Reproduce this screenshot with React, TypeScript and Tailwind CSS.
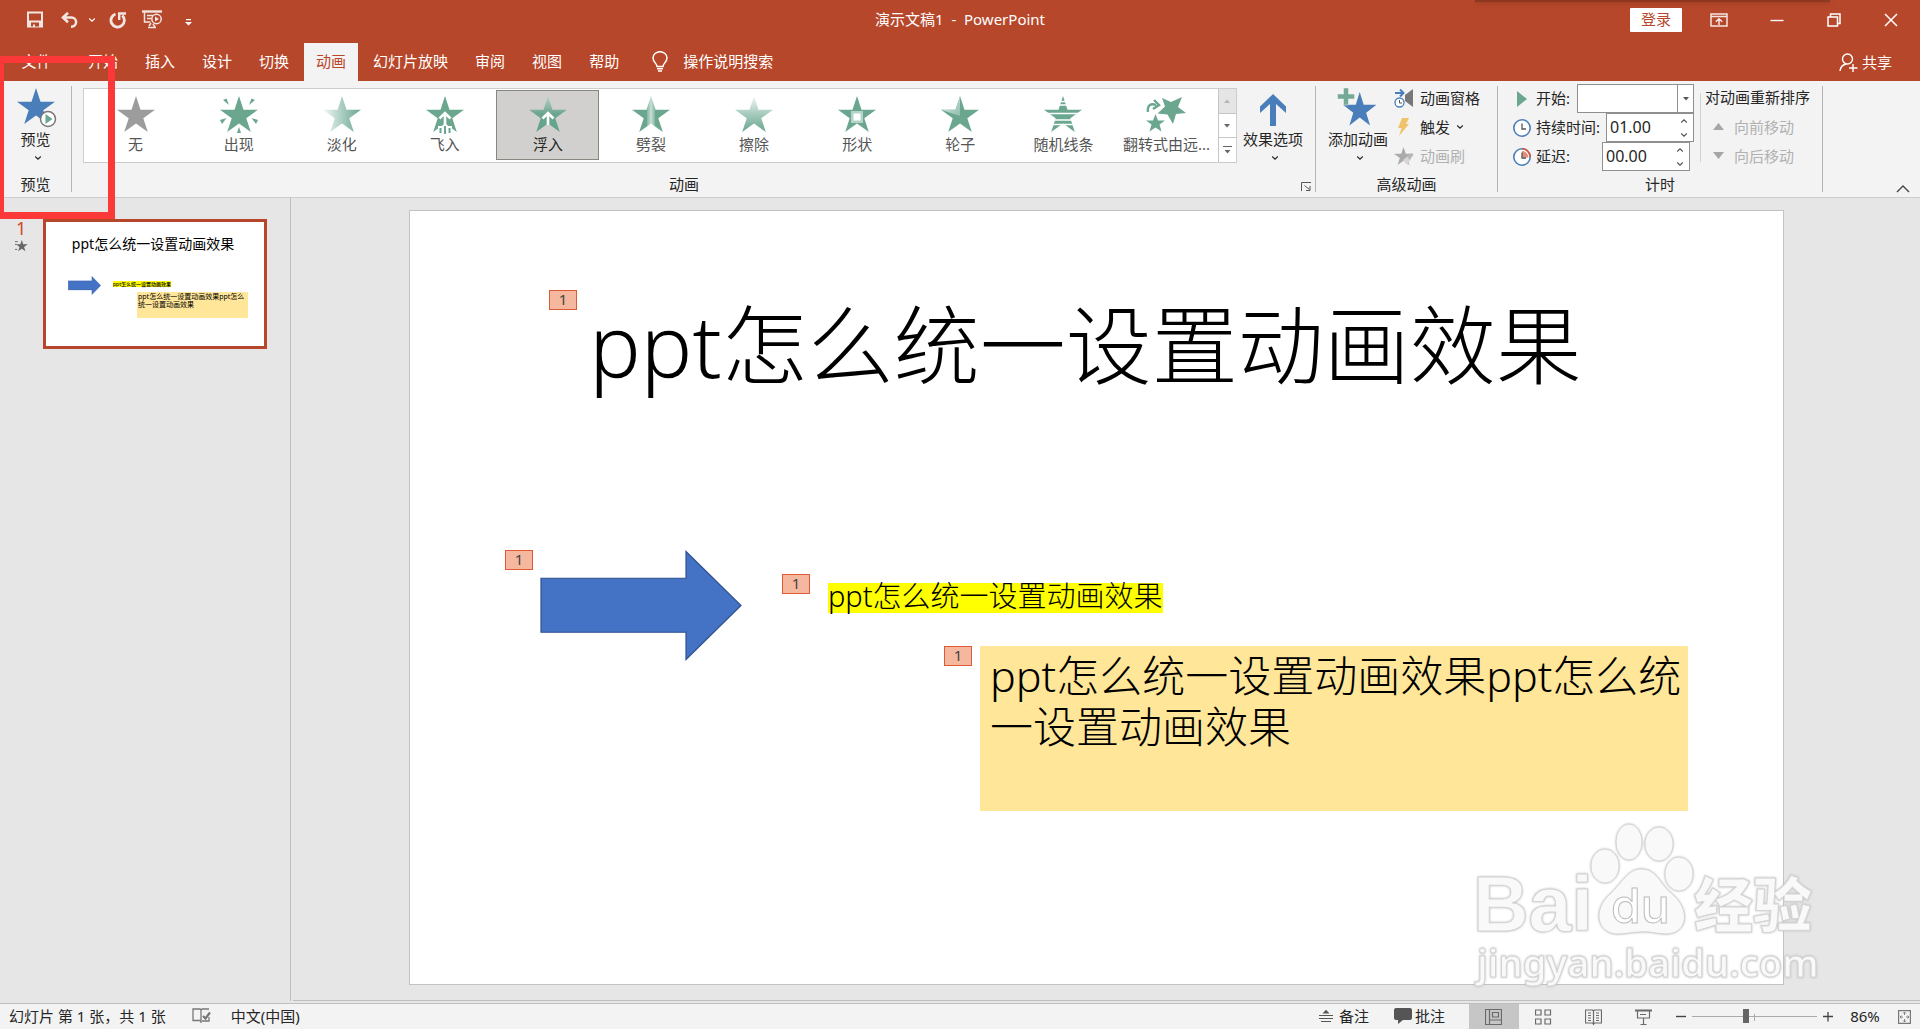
import React, { useState } from "react";

const TITLE = "ppt怎么统一设置动画效果";
const STAR = "19,0 23.5,13.7 38,13.7 26.3,22.2 30.8,36 19,27.5 7.2,36 11.7,22.2 0,13.7 14.5,13.7";
const GREEN = "#6ba68f";

function Chevron({ className = "" }: { className?: string }) {
  return (
    <svg className={className} width="8" height="6" viewBox="0 0 8 6" fill="none" stroke="currentColor" strokeWidth="1.1">
      <path d="M1.2 1.5 4 4.2 6.8 1.5" />
    </svg>
  );
}

/* ---------- title bar ---------- */

function TitleBar() {
  return (
    <div className="relative flex h-[43px] items-center px-[26px] pb-1 text-white">
      <div className="absolute top-0 right-[90px] h-[2px] w-[355px] bg-[#8f3820] shadow-[0_1px_4px_#8f3820]" />
      <div className="flex flex-1 items-center">
        <button aria-label="保存">
          <svg width="18" height="17" viewBox="0 0 18 17" fill="#f3e6e2">
            <path fillRule="evenodd" d="M1 .5h16v16H1zM3 2.500v7h12v-7zM5 11.500v4h2v-2h2v2h4v-4z" />
          </svg>
        </button>
        <button aria-label="撤消" className="ml-[17px]">
          <svg width="18" height="16" viewBox="0 0 18 16" fill="none" stroke="#f3e6e2" strokeWidth="2.600">
            <path d="M2 5.500h8.500a4.600 4.600 0 0 1 0 9.200H10M7 .8 2 5.500l5 4.700" />
          </svg>
        </button>
        <button aria-label="撤消选项" className="ml-[9px]">
          <Chevron />
        </button>
        <button aria-label="重复" className="ml-[13px]">
          <svg width="18" height="18" viewBox="0 0 18 18" fill="none" stroke="#f3e6e2" strokeWidth="2.800">
            <path d="M6.500 3A6.700 6.700 0 1 0 13.300 4.500" />
            <path d="M10.200 9V2.500H17" strokeWidth="2.400" />
          </svg>
        </button>
        <button aria-label="从头开始" className="ml-[15px]">
          <svg width="21" height="19" viewBox="0 0 21 19" fill="none" stroke="#f3e6e2" strokeWidth="1.500">
            <path d="M0 1.500h20" strokeWidth="2.400" />
            <path d="M2.500 2v10h6M5 5.500h6M5 8.500h4M9 13l-2 3M6 17.500h8M11 14l2 3" />
            <circle cx="14.500" cy="9" r="4.700" />
            <path d="M13 6.500v5l4-2.500z" fill="#f3e6e2" stroke="none" />
          </svg>
        </button>
        <button aria-label="自定义快速访问工具栏" className="ml-[22px] mt-1">
          <svg width="7" height="8" viewBox="0 0 7 8" fill="#fff">
            <path d="M1 1h5v1.200H1zM0 4h7L3.500 7.500z" />
          </svg>
        </button>
      </div>
      <div className="pb-0.5 whitespace-pre">{"演示文稿1  -  PowerPoint"}</div>
      <div className="flex flex-1 items-center justify-end">
        <button className="mr-[28px] h-6 w-[52px] rounded-[1px] bg-white pb-px text-[#b7472a]">登录</button>
        <button aria-label="功能区显示选项" className="mr-[42px]">
          <svg width="18" height="14" viewBox="0 0 18 14" fill="none" stroke="#f3e6e2" strokeWidth="1.500">
            <path d="M1 1h16v12H1zM1 3.500h16M9 12V6M5.800 8.800 9 5.800l3.200 3" />
          </svg>
        </button>
        <button aria-label="最小化" className="mr-[43px]">
          <svg width="14" height="14" viewBox="0 0 14 14" stroke="#fff" strokeWidth="1.400">
            <path d="M.5 7.500h13" />
          </svg>
        </button>
        <button aria-label="还原" className="mr-[43px]">
          <svg width="14" height="14" viewBox="0 0 14 14" fill="none" stroke="#fff" strokeWidth="1.500">
            <path d="M1 4h9.500v9H1zM3.500 4V1H13v9.500h-2.500" />
          </svg>
        </button>
        <button aria-label="关闭" className="-mr-1">
          <svg width="14" height="14" viewBox="0 0 14 14" stroke="#fff" strokeWidth="1.500">
            <path d="m1 1 12 12M13 1 1 13" />
          </svg>
        </button>
      </div>
    </div>
  );
}

/* ---------- tabs ---------- */

const TABS = ["开始", "插入", "设计", "切换", "动画", "幻灯片放映", "审阅", "视图", "帮助"];

function TabBar() {
  return (
    <div className="flex h-[38px] items-stretch gap-[3px] text-white">
      <button className="w-[73px] pb-0.5">文件</button>
      {TABS.map((t) => (
        <button key={t} className={t === "动画" ? "bg-[#f3f3f3] px-3 pb-0.5 text-[#b7472a]" : "px-3 pb-0.5"}>
          {t}
        </button>
      ))}
      <button className="ml-[18px] flex items-center gap-[15px] pb-0.5">
        <svg width="16" height="21" viewBox="0 0 16 21" fill="none" stroke="#fff" strokeWidth="1.500">
          <path d="M5 15.500c0-3-4-4.500-4-8.500a7 6.300 0 0 1 14 0c0 4-4 5.500-4 8.500zM5 17.800h6M6 20h4" />
        </svg>
        操作说明搜索
      </button>
      <button className="mr-7 ml-auto flex items-center gap-1">
        <svg width="19" height="19" viewBox="0 0 19 19" fill="none" stroke="#fff" strokeWidth="1.400">
          <circle cx="8.500" cy="6" r="5" />
          <path d="M1 18c.5-4 3-6.500 6.500-7M14 11v8M10 15h8.500" />
        </svg>
        共享
      </button>
    </div>
  );
}

/* ---------- ribbon ---------- */

function Stops({ id, x2, y2, stops }: { id: string; x2: string; y2: string; stops: [string, string][] }) {
  return (
    <linearGradient id={id} x1="0" y1="0" x2={x2} y2={y2}>
      {stops.map(([o, c]) => (
        <stop key={o} offset={o} stopColor={c} />
      ))}
    </linearGradient>
  );
}

const EFFECTS: { name: string; art: React.ReactNode }[] = [
  { name: "无", art: <polygon points={STAR} fill="#9c9c9c" /> },
  {
    name: "出现",
    art: (
      <g fill={GREEN}>
        <polygon points={STAR} />
        <path d="M3 4l3.500-1.500L9 9zM35 4l-3.500-1.500L29 9zM0 24l6.500-2L2 28zM38 24l-6.500-2 4.500 6zM17 37l2-6 2 6z" />
      </g>
    ),
  },
  {
    name: "淡化",
    art: (
      <>
        <Stops id="fade" x2="1" y2="0" stops={[["0", "#f2f8f6"], ["0.6", "#9cc5b6"], ["1", GREEN]]} />
        <polygon points={STAR} fill="url(#fade)" />
      </>
    ),
  },
  {
    name: "飞入",
    art: (
      <>
        <polygon points={STAR} fill={GREEN} />
        <path d="M12 38V30h14v8z" fill="#fff" />
        <path d="M19 29V18M13.500 22.500 19 17l5.500 5.500" fill="none" stroke="#fff" strokeWidth="2.600" />
        <path d="M14.500 32v5M19 30v8M23.500 32v5" stroke={GREEN} strokeWidth="2" />
      </>
    ),
  },
  {
    name: "浮入",
    art: (
      <>
        <Stops id="float" x2="0" y2="1" stops={[["0", "#b9d3c9"], ["0.5", GREEN], ["1", "#62a38a"]]} />
        <polygon points={STAR} fill="url(#float)" />
        <path d="M19 29V18M13.500 22.500 19 17l5.500 5.500" fill="none" stroke="#fff" strokeWidth="2.600" />
      </>
    ),
  },
  {
    name: "劈裂",
    art: (
      <>
        <Stops id="split" x2="1" y2="0" stops={[["0.38", GREEN], ["0.4", "#86b7a4"], ["0.5", "#c9e0d8"], ["0.6", "#86b7a4"], ["0.62", GREEN]]} />
        <polygon points={STAR} fill="url(#split)" />
      </>
    ),
  },
  {
    name: "擦除",
    art: (
      <>
        <Stops id="wipe" x2="0" y2="1" stops={[["0", "#f2f8f6"], ["0.5", "#a5cbbd"], ["1", GREEN]]} />
        <polygon points={STAR} fill="url(#wipe)" />
      </>
    ),
  },
  {
    name: "形状",
    art: (
      <>
        <polygon points={STAR} fill={GREEN} />
        <rect x="13" y="15" width="12" height="12" fill="#b5d3c8" />
        <rect x="15.500" y="17.500" width="7" height="7" fill="#fff" />
      </>
    ),
  },
  {
    name: "轮子",
    art: (
      <>
        <polygon points={STAR} fill={GREEN} />
        <Stops id="wheel" x2="1" y2="1" stops={[["0", "#e5f1ed"], ["1", "#8fbdac"]]} />
        <polygon points="19,0 19,20 0,13.7 14.5,13.7" fill="url(#wheel)" />
      </>
    ),
  },
  {
    name: "随机线条",
    art: (
      <>
        <polygon points={STAR} fill={GREEN} />
        <path d="M0 5.500h38M0 9h38M0 17.500h38M0 24h38M0 28.500h38" stroke="#fff" strokeWidth="1.300" />
      </>
    ),
  },
  {
    name: "翻转式由远...",
    art: (
      <g fill={GREEN}>
        <polygon points="35,1 31,11 39,17 29,18 26,28 20.5,18.5 10.5,17.5 18,10.5 15,2 24,6" />
        <polygon points="8.5,18 11,24.5 18,24.5 12.5,28.5 14.5,35.5 8.5,31.5 2.5,35.5 4.5,28.5 -1,24.5 6,24.5" />
        <path d="M1 16C0 9 4 7 9 9M7 4l5 5-6 4" fill="none" stroke={GREEN} strokeWidth="2.400" />
      </g>
    ),
  },
];

function Group({
  label,
  className = "",
  labelClass = "",
  children,
}: {
  label: string;
  className?: string;
  labelClass?: string;
  children: React.ReactNode;
}) {
  return (
    <section aria-label={label} className={"relative flex flex-col " + className}>
      <div className="flex flex-1">{children}</div>
      <div className={"h-[22px] text-center leading-[18px] " + labelClass}>{label}</div>
    </section>
  );
}

function Rule() {
  return <div className="mt-[5px] mb-[5px] w-px shrink-0 bg-[#b5b5b5]" />;
}

function BigButton({ label, icon, className = "" }: { label: string; icon: React.ReactNode; className?: string }) {
  return (
    <button className={"flex flex-col items-center " + className}>
      <span className="flex h-[48px] items-end">{icon}</span>
      <span className="leading-5">{label}</span>
      <Chevron className="mt-1.5 ml-1" />
    </button>
  );
}

function Gallery() {
  const [sel, setSel] = useState("浮入");
  return (
    <div className="mt-[7px] flex h-[75px] flex-1 border border-[#cdcdcd] bg-white">
      <div className="flex flex-1 items-start pt-px">
        {EFFECTS.map((e) => (
          <button
            key={e.name}
            onClick={() => setSel(e.name)}
            className={
              "flex h-[70px] min-w-0 flex-1 flex-col items-center border pt-[5px] " +
              (sel === e.name ? "border-[#85887f] bg-[#d2d0ce] text-[#262626]" : "border-transparent text-[#555]")
            }
          >
            <svg width="38" height="38" viewBox="0 0 38 38" className="shrink-0 overflow-visible">
              {e.art}
            </svg>
            <span className="leading-5 whitespace-nowrap">{e.name}</span>
          </button>
        ))}
      </div>
      <div className="flex w-[18px] flex-col divide-y divide-[#c6c6c6] border-l border-[#c6c6c6] text-[#666]">
        <button aria-label="上一行" className="flex flex-1 items-center justify-center bg-[#e5e5e5] text-[#b5b5b5]">
          <svg width="6" height="4" viewBox="0 0 6 4" fill="currentColor"><path d="M0 4 3 .5 6 4z" /></svg>
        </button>
        <button aria-label="下一行" className="flex flex-1 items-center justify-center">
          <svg width="6" height="4" viewBox="0 0 6 4" fill="currentColor"><path d="M0 0h6L3 3.500z" /></svg>
        </button>
        <button aria-label="其他" className="flex flex-1 items-center justify-center">
          <svg width="9" height="8" viewBox="0 0 9 8" fill="currentColor"><path d="M0 0h9v1H0zM1.500 4h6l-3 3.500z" /></svg>
        </button>
      </div>
    </div>
  );
}

function Spinner({ id, value, className }: { id: string; value: string; className: string }) {
  return (
    <div className={"flex h-[29px] w-[88px] border border-[#8f8f8f] bg-white " + className}>
      <input id={id} defaultValue={value} className="w-[66px] min-w-0 bg-transparent pb-0.5 pl-[3px] text-base outline-none" />
      <div className="flex flex-col justify-center gap-2 pl-[7px] text-[#555]">
        <button aria-label="增加"><Chevron className="rotate-180" /></button>
        <button aria-label="减少"><Chevron /></button>
      </div>
    </div>
  );
}

function Clock({ red = false }: { red?: boolean }) {
  return (
    <svg width="18" height="18" viewBox="0 0 18 18" fill="none">
      <circle cx="9" cy="9" r="8.200" fill="#fff" stroke="#4a7ebb" strokeWidth="1.600" />
      {red && <path d="M9 .8A8.200 8.200 0 0 1 17.200 9" stroke="#d9573a" strokeWidth="1.600" />}
      {red && <path d="M9 3v6.500h6.500A6.500 6.500 0 0 0 9 3z" fill="#e58f78" />}
      <path d="M9 4.500V10h4" stroke="#555" strokeWidth="1.300" />
    </svg>
  );
}

function Ribbon() {
  return (
    <div className="relative flex h-[117px] border-b border-[#cdcdcd] bg-[#f3f3f3] text-[#262626]">
      <Group label="预览" className="w-[71px]">
        <BigButton
          label="预览"
          className="mx-auto"
          icon={
            <svg width="42" height="41" viewBox="-2 0 42 41" className="overflow-visible">
              <polygon points={STAR} fill="#4a7ebb" />
              <circle cx="31" cy="31" r="7.500" fill="#fff" stroke="#777" strokeWidth="1.500" />
              <path d="M28.500 26v10l7-5z" fill={GREEN} />
            </svg>
          }
        />
      </Group>
      <Rule />
      <Group label="动画" className="ml-[11px] flex-1" labelClass="pr-[30px]">
        <Gallery />
        <BigButton
          label="效果选项"
          className="mr-3 ml-1.5"
          icon={
            <svg width="28" height="38" viewBox="0 0 28 38" fill="#4a7ebb">
              <path d="M14 3 1 15.500V22L11 13v22h6V13l10 9v-6.500z" />
            </svg>
          }
        />
        <button aria-label="动画设置" className="absolute right-[4px] bottom-[6px]">
          <svg width="10" height="9" viewBox="0 0 10 9" fill="none" stroke="#555">
            <path d="M.5 9V.5H10M3.500 3.500l5 4M9 4v4.500H5" />
          </svg>
        </button>
      </Group>
      <Rule />
      <Group label="高级动画" className="w-[181px]">
        <BigButton
          label="添加动画"
          className="ml-3"
          icon={
            <svg width="42" height="41" viewBox="0 0 42 41">
              <g transform="translate(6 4) scale(.88 .93)">
                <polygon points={STAR} fill="#4a7ebb" />
              </g>
              <path d="M6.500 0h5v6h6v5h-6v6h-5v-6h-6V6h6z" fill="#74aa95" stroke="#f3f3f3" strokeWidth=".5" />
            </svg>
          }
        />
        <div className="ml-1.5 flex flex-col pt-0.5">
          <button className="flex h-[29px] items-center gap-1.5">
            <svg width="20" height="20" viewBox="0 0 20 20" fill="none">
              <path d="M1 5h8M6 1.500 9.500 5 6 8.500" stroke="#4a7ebb" strokeWidth="2" />
              <circle cx="5.500" cy="14.500" r="4.500" fill="#fff" stroke="#4a7ebb" strokeWidth="1.300" />
              <path d="M5.500 12v3H8" stroke="#555" />
              <path d="M19 1v18l-8-6V7z" fill="#777" />
            </svg>
            动画窗格
          </button>
          <button className="flex h-[29px] items-center gap-1.5">
            <svg width="20" height="20" viewBox="0 0 20 20">
              <path d="M8 1h7l-3 6h3L5 19l2.500-8H4z" fill="#efc36a" />
            </svg>
            触发
            <Chevron />
          </button>
          <button disabled className="flex h-[29px] items-center gap-1.5 text-[#b1b1b1]">
            <svg width="20" height="20" viewBox="0 0 20 20">
              <g transform="translate(0 1) scale(.5)">
                <polygon points={STAR} fill="#ababab" />
              </g>
              <path d="m9 14 5-4 3 3-4 6z" fill="#ddd3da" />
              <path d="m13 10 5-3 1.500 2-4 5z" fill="#b8b8b8" />
            </svg>
            动画刷
          </button>
        </div>
      </Group>
      <Rule />
      <Group label="计时" className="w-[324px]">
        <div className="flex flex-col pt-[3px] pl-[15px]">
          <div className="flex h-[29px] w-[181px] items-center">
            <span className="flex w-[23px] pl-1">
              <svg width="10" height="16" viewBox="0 0 10 16"><path d="M0 0v16l10-8z" fill="#6ba68f" /></svg>
            </span>
            <label htmlFor="start" className="pb-0.5">开始:</label>
            <div className="relative ml-auto">
              <select id="start" defaultValue="" className="block h-[29px] w-[117px] appearance-none border border-[#8f8f8f] bg-white outline-none">
                <option value="" />
                <option>单击时</option>
              </select>
              <span className="pointer-events-none absolute inset-y-px right-px flex w-4 items-center justify-center border-l border-[#8f8f8f]">
                <svg width="6" height="4" viewBox="0 0 6 4" fill="#555"><path d="M0 0h6L3 3.500z" /></svg>
              </span>
            </div>
          </div>
          <div className="flex h-[29px] w-[181px] items-center">
            <span className="w-[23px]"><Clock /></span>
            <label htmlFor="dur" className="pb-0.5">持续时间:</label>
            <Spinner id="dur" value="01.00" className="ml-auto" />
          </div>
          <div className="flex h-[29px] w-[177px] items-center">
            <span className="w-[23px]"><Clock red /></span>
            <label htmlFor="delay" className="pb-0.5">延迟:</label>
            <Spinner id="delay" value="00.00" className="ml-auto" />
          </div>
        </div>
        <div className="mt-3 ml-[6px] h-[69px] w-px bg-[#d2d2d2]" />
        <div className="flex flex-col pt-0.5 pl-1">
          <div className="flex h-[29px] items-center pb-0.5">对动画重新排序</div>
          <button disabled className="flex h-[29px] items-center gap-2.5 pl-2 text-[#b1b1b1]">
            <svg width="11" height="7" viewBox="0 0 11 7" fill="#a6a6a6"><path d="M0 7 5.500 0 11 7z" /></svg>
            向前移动
          </button>
          <button disabled className="flex h-[29px] items-center gap-2.5 pl-2 text-[#b1b1b1]">
            <svg width="11" height="7" viewBox="0 0 11 7" fill="#a6a6a6"><path d="M0 0h11L5.500 7z" /></svg>
            向后移动
          </button>
        </div>
      </Group>
      <Rule />
      <div className="flex w-[97px] items-end justify-end pr-2.5 pb-1">
        <button aria-label="折叠功能区">
          <svg width="14" height="8" viewBox="0 0 14 8" fill="none" stroke="#444" strokeWidth="1.400">
            <path d="m1 7 6-6 6 6" />
          </svg>
        </button>
      </div>
    </div>
  );
}

/* ---------- workspace ---------- */

function Arrow({ className, width, height }: { className: string; width: number; height: number }) {
  return (
    <svg className={className} width={width} height={height} viewBox="0 0 202 112" preserveAspectRatio="none">
      <path d="M1 28.500h145V1.500l55 54.500-55 54.500V83H1z" fill="#4472c4" stroke="#2f528f" strokeWidth="1.200" />
    </svg>
  );
}

function Tag({ className }: { className: string }) {
  return (
    <div className={"absolute h-5 w-7 border border-[#dd5a38] bg-[#f5b79e] text-center leading-[17px] font-normal text-[#444] " + className}>
      1
    </div>
  );
}

function Thumbnails() {
  return (
    <aside className="flex w-[291px] items-start border-r border-[#bfbfbf] pt-[21px] pl-[15px]">
      <div className="flex w-7 flex-col">
        <span className="pl-px text-lg leading-[18px] text-[#d24726]">1</span>
        <svg width="13" height="12" viewBox="-3 0 42 38" className="mt-[3px]">
          <polygon points={STAR} fill="#666" />
          <path d="M-4 5h10M-4 14h6M-4 30h8" stroke="#666" strokeWidth="3" />
        </svg>
      </div>
      <button aria-label="幻灯片 1" className="relative h-[130px] w-[224px] border-[3px] border-[#b7472a] bg-white text-left text-black">
        <span className="absolute inset-x-0 top-3 pr-1 text-center text-sm leading-5">{TITLE}</span>
        <Arrow className="absolute top-[54px] left-[22px]" width={33} height={19} />
        <span className="absolute top-[59px] left-[67px] bg-[#ff0] text-[5px] leading-[6px] font-medium whitespace-nowrap">{TITLE}</span>
        <span className="absolute top-[70px] left-[91px] h-[26px] w-[111px] bg-[#ffe699] pt-px pl-px text-[7px] leading-[8px]">
          {TITLE + TITLE}
        </span>
      </button>
    </aside>
  );
}

function Slide() {
  return (
    <main className="flex flex-1 items-start border-b border-[#bfbfbf] pt-3 pr-[136px] pl-[116px]">
      <div className="relative h-[775px] flex-1 border border-[#c3c3c3] bg-white font-light text-black">
        <h1 className="absolute inset-x-0 top-[76px] pr-[22px] text-center text-[86px] leading-[116px] font-light whitespace-nowrap">{TITLE}</h1>
        <Tag className="top-[79px] left-[139px]" />
        <Arrow className="absolute top-[339px] left-[130px]" width={202} height={111} />
        <Tag className="top-[339px] left-[95px]" />
        <Tag className="top-[363px] left-[372px]" />
        <p className="absolute top-[372px] left-[418px] h-[30px] bg-[#ff0] text-[29px] leading-[26px] whitespace-nowrap">{TITLE}</p>
        <Tag className="top-[435px] left-[534px]" />
        <p className="absolute top-[435px] left-[570px] h-[165px] w-[708px] bg-[#ffe699] pt-1 pl-2.5 text-[43px] leading-[51px]">
          {TITLE + TITLE}
        </p>
      </div>
    </main>
  );
}

function Watermark() {
  return (
    <svg
      className="pointer-events-none absolute right-[94px] bottom-[3px] overflow-visible drop-shadow-[0_0_1px_#bbb]"
      width="356"
      height="180"
      viewBox="1470 818 356 180"
      fill="#fff"
      fillOpacity=".9"
      stroke="#d4d4d4"
      strokeWidth="1"
    >
      <text x="1473" y="931" fontFamily="Liberation Sans" fontWeight="700" fontSize="77">Bai</text>
      <ellipse cx="1605" cy="866" rx="14" ry="17" />
      <ellipse cx="1629" cy="842" rx="13" ry="18" />
      <ellipse cx="1659" cy="844" rx="14" ry="17" />
      <ellipse cx="1679" cy="874" rx="14" ry="17" />
      <path d="M1641 869c16 0 18 14 30 24 20 16 17 40-4 41-11 0-16-3-27-2-8 0-14 2-22 2-21 0-26-24-8-40 12-11 18-25 31-25z" />
      <text x="1611" y="923" fontFamily="Inter" fontWeight="500" fontSize="48" stroke="#bbb">du</text>
      <text x="1694" y="927" fontFamily="Noto Sans CJK SC" fontWeight="900" fontSize="59">经验</text>
      <text x="1477" y="977" fontFamily="Noto Sans" fontWeight="600" fontSize="38">jingyan.baidu.com</text>
    </svg>
  );
}

/* ---------- status bar ---------- */

const VIEWS = [
  { name: "普通视图", d: "M.5.500h16v15H.5zM4.500.500v15M4.500 11h12M7.500 3.500h6v4.500h-6z" },
  { name: "幻灯片浏览", d: "M.5 1h5.500v5H.500zM10 1h5.500v5H10zM.500 10h5.500v5H.500zM10 10h5.500v5H10z" },
  { name: "阅读视图", d: "M.500 1h7l1 1 1-1h7v13h-7l-1 1-1-1h-7zM8.500 2v14M3 4h3M3 6.500h3M3 9h3M3 11.500h3M11 4h3M11 6.500h3M11 9h3M11 11.500h3" },
  { name: "幻灯片放映", d: "M0 1h17M0 2h17M2.500 2v7h12V2M5 5.500h6M8.500 9v6M5.500 15.500h6" },
];

function StatusBar() {
  return (
    <footer className="mt-[2px] flex h-[26px] items-center border-t border-[#bfbfbf] bg-[#f3f3f3] pl-[9px] text-[#262626]">
      <span className="pb-0.5 whitespace-pre">幻灯片 第 1 张，共 1 张</span>
      <button aria-label="拼写检查" className="ml-[26px] pb-0.5">
        <svg width="19" height="15" viewBox="0 0 19 15" fill="none" stroke="#777" strokeWidth="1.300">
          <path d="M9 13.500 8 12.500H1V1h7l1 1 1-1h7M9 2v13M17 9v4h-7" />
          <path d="m11 8 2.500 2.500L18 4.500" strokeWidth="2.200" />
        </svg>
      </button>
      <span className="ml-5 pb-0.5">中文(中国)</span>
      <div className="ml-auto flex h-full items-center">
        <button className="flex items-center gap-1.5 pb-0.5">
          <svg width="14" height="14" viewBox="0 0 14 14" fill="none" stroke="#555" strokeWidth="1.200">
            <path d="M3.500 4.500 7 .8l3.500 3.700z" fill="#555" stroke="none" />
            <path d="M0 6.500h14M0 9.500h14M2 12.500h10" />
          </svg>
          备注
        </button>
        <button className="ml-[25px] flex items-center gap-[3px] pb-0.5">
          <svg width="18" height="16" viewBox="0 0 18 16" fill="#555">
            <path d="M2 0h14q2 0 2 2v8q0 2-2 2H9l-5 4v-4H2q-2 0-2-2V2q0-2 2-2z" />
          </svg>
          批注
        </button>
        <div className="ml-6 flex h-full">
          {VIEWS.map((v, i) => (
            <button key={v.name} aria-label={v.name} className={"flex w-[50px] items-center justify-center pr-px " + (i === 0 ? "bg-[#c6c6c6]" : "")}>
              <svg width="17" height="16" viewBox="0 0 17 16" fill="none" stroke="#6a6a6a" strokeWidth="1.200">
                <path d={v.d} />
              </svg>
            </button>
          ))}
        </div>
        <button aria-label="缩小" className="ml-[7px]">
          <svg width="10" height="10" viewBox="0 0 10 10" stroke="#444" strokeWidth="1.400"><path d="M0 4.500h10" /></svg>
        </button>
        <div className="relative ml-1.5 flex w-[125px] items-center">
          <span className="absolute top-[5px] left-[62px] h-[7px] w-px bg-[#ababab]" />
          <input
            type="range"
            aria-label="显示比例"
            min={10}
            max={190}
            defaultValue={87}
            className="relative h-4 w-full appearance-none bg-transparent [&::-webkit-slider-runnable-track]:h-px [&::-webkit-slider-runnable-track]:bg-[#ababab] [&::-webkit-slider-thumb]:-mt-[7px] [&::-webkit-slider-thumb]:h-[14px] [&::-webkit-slider-thumb]:w-[6px] [&::-webkit-slider-thumb]:appearance-none [&::-webkit-slider-thumb]:bg-[#666]"
          />
        </div>
        <button aria-label="放大" className="ml-1.5">
          <svg width="10" height="10" viewBox="0 0 10 10" stroke="#444" strokeWidth="1.300"><path d="M0 4.500h10M5 0v9.500" /></svg>
        </button>
        <button className="ml-4 w-8 pb-px">86%</button>
        <button aria-label="适应窗口" className="mr-[9px] ml-[17px]">
          <svg width="13" height="14" viewBox="0 0 13 14" fill="none" stroke="#777" strokeWidth="1.200">
            <path d="M.6.600h11.800v12.800H.600z" />
            <path d="M6.500 2v3M6.500 9v3M2 7h3M8 7h3M5 3.500 6.500 2 8 3.500M5 10.500 6.500 12 8 10.500M3.500 5.500 2 7l1.500 1.500M9.500 5.500 11 7 9.500 8.500" strokeWidth=".9" />
          </svg>
        </button>
      </div>
    </footer>
  );
}

export default function App() {
  return (
    <div className="relative flex min-h-screen flex-col bg-[#e6e6e6] font-['Noto_Sans','Noto_Sans_CJK_SC',sans-serif] text-[15px] leading-5">
      <header className="bg-[#b7472a]">
        <TitleBar />
        <TabBar />
      </header>
      <Ribbon />
      <div className="relative flex flex-1">
        <div className="flex flex-1 gap-[2px]">
          <Thumbnails />
          <Slide />
        </div>
        <Watermark />
      </div>
      <StatusBar />
      <div className="pointer-events-none absolute top-[56px] left-0 h-[163px] w-[115px] border-[7px] border-l-4 border-[#fd3838]" />
    </div>
  );
}
